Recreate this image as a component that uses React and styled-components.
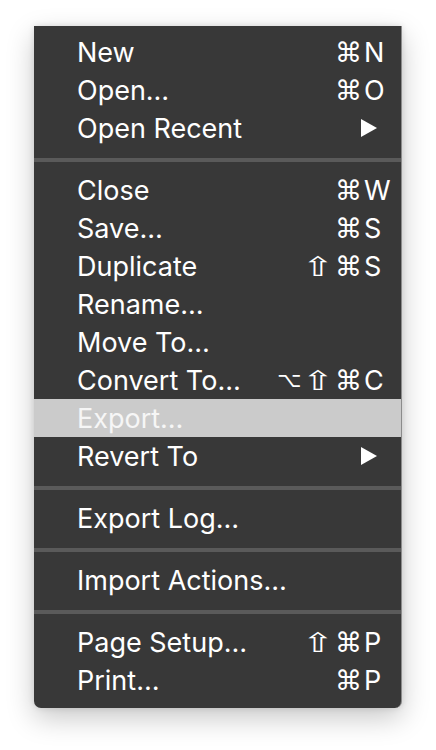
import React from "react";
import styled, { createGlobalStyle } from "styled-components";

const GlobalStyle = createGlobalStyle`
  html, body {
    margin: 0;
    padding: 0;
    background: #ffffff;
  }
`;

const Page = styled.div`
  width: 436px;
  height: 750px;
  padding: 26px 0 0 34px;
  box-sizing: border-box;
`;

const Menu = styled.div`
  width: 368px;
  box-sizing: border-box;
  padding: 7px 0 9px;
  background: #383838;
  border-right: 1px solid #8c8c8c;
  border-radius: 0 0 7px 7px;
  box-shadow: 0 10px 28px rgba(0, 0, 0, 0.22), 0 0 6px rgba(0, 0, 0, 0.12);
  font-family: Inter, "Noto Sans", sans-serif;
  color: #ffffff;
`;

const Item = styled.div`
  height: 38px;
  display: flex;
  align-items: center;
  padding: 0 14px 0 43px;
  font-size: 27px;
  background: ${(p) => (p.$active ? "#cbcbcb" : "transparent")};
  color: ${(p) => (p.$active ? "#f6f6f6" : "#ffffff")};
`;

const Label = styled.span`
  flex: 1;
  white-space: nowrap;
`;

const Shortcut = styled.span`
  display: flex;
  align-items: center;
`;

const Mod = styled.span`
  display: inline-block;
  width: 24px;
  margin-right: 5px;
  text-align: center;
  font-family: "DejaVu Sans", sans-serif;
  font-size: ${(p) => p.$size}px;
  line-height: 1;
  transform: ${(p) => (p.$wide ? "scaleX(1.4)" : "none")};
`;

const Key = styled.span`
  width: 23px;
  text-align: left;
`;

const Arrow = styled.svg`
  width: 18px;
  height: 20px;
  margin-right: 9px;
`;

const Separator = styled.div`
  height: 4px;
  margin: 11px 0 9px;
  background: #5a5a5a;
`;

const groups = [
  [
    { label: "New", mods: "⌘", key: "N" },
    { label: "Open…", mods: "⌘", key: "O" },
    { label: "Open Recent", sub: true },
  ],
  [
    { label: "Close", mods: "⌘", key: "W" },
    { label: "Save…", mods: "⌘", key: "S" },
    { label: "Duplicate", mods: "⇧⌘", key: "S" },
    { label: "Rename…" },
    { label: "Move To…" },
    { label: "Convert To…", mods: "⌥⇧⌘", key: "C" },
    { label: "Export…", active: true },
    { label: "Revert To", sub: true },
  ],
  [{ label: "Export Log…" }],
  [{ label: "Import Actions…" }],
  [
    { label: "Page Setup…", mods: "⇧⌘", key: "P" },
    { label: "Print…", mods: "⌘", key: "P" },
  ],
];

function MenuItem({ item }) {
  return (
    <Item $active={item.active}>
      <Label>{item.label}</Label>
      {item.key && (
        <Shortcut>
          {[...item.mods].map((m, i) => (
            <Mod key={i} $wide={m === "⇧"} $size={m === "⌥" ? 21 : 27}>
              {m}
            </Mod>
          ))}
          <Key>{item.key}</Key>
        </Shortcut>
      )}
      {item.sub && (
        <Arrow viewBox="0 0 18 20">
          <path d="M1 1 L17 10 L1 19 Z" fill="#ffffff" />
        </Arrow>
      )}
    </Item>
  );
}

export default function App() {
  return (
    <>
      <GlobalStyle />
      <Page>
        <Menu>
          {groups.map((group, gi) => (
            <React.Fragment key={gi}>
              {gi > 0 && <Separator />}
              {group.map((item) => (
                <MenuItem key={item.label} item={item} />
              ))}
            </React.Fragment>
          ))}
        </Menu>
      </Page>
    </>
  );
}
